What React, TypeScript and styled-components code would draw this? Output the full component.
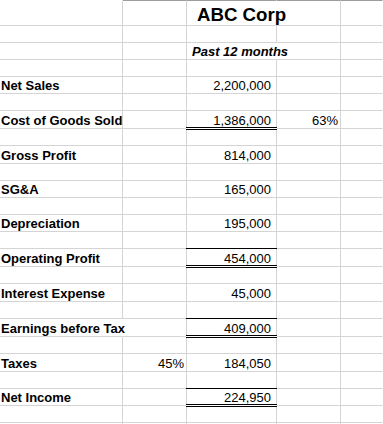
import React from 'react';
import styled, { createGlobalStyle, css } from 'styled-components';

const GlobalStyle = createGlobalStyle`
  html, body {
    margin: 0;
    padding: 0;
    background: #ffffff;
  }
  body {
    font-family: 'Liberation Sans', Arial, sans-serif;
  }
`;

const GRID = '#d4d4d4';

// row heights in px, border included (first row also carries the frame line)
const ROW_HEIGHTS = [26, 17, 17, 17, 17, 17, 18, 17, 18, 17, 17, 17, 17, 17, 18, 17, 18, 17, 18, 17, 18, 17, 17, 17, 17];

const Sheet = styled.div`
  width: 383px;
  height: 424px;
  overflow: hidden;
  display: grid;
  grid-template-columns: 123px 64px 90px 64px 1fr;
  grid-template-rows: ${ROW_HEIGHTS.map((h) => `${h}px`).join(' ')};
  background: #ffffff;
  color: #000000;
`;

type Rule = 'double' | 'total';

const Cell = styled.div<{
  $align?: 'left' | 'right';
  $bold?: boolean;
  $italic?: boolean;
  $big?: boolean;
  $frame?: boolean;
  $open?: boolean;
  $last?: boolean;
  $padL?: number;
  $padR?: number;
  $rule?: Rule;
}>`
  position: relative;
  box-sizing: border-box;
  min-width: 0;
  display: flex;
  align-items: flex-end;
  justify-content: ${(p) => (p.$align === 'right' ? 'flex-end' : 'flex-start')};
  padding: 0 ${(p) => p.$padR ?? 0}px 0 ${(p) => p.$padL ?? 0}px;
  border-bottom: 1px solid ${GRID};
  border-right: 1px solid ${(p) => (p.$open || p.$last ? 'transparent' : GRID)};
  border-top: ${(p) => (p.$frame === undefined ? '0' : `1px solid ${p.$frame ? '#9c9c9c' : 'transparent'}`)};
  white-space: nowrap;
  font-size: ${(p) => (p.$big ? '18.67px' : '13px')};
  line-height: ${(p) => (p.$big ? '21px' : '15px')};
  font-weight: ${(p) => (p.$bold ? 700 : 400)};
  font-style: ${(p) => (p.$italic ? 'italic' : 'normal')};

  ${(p) =>
    p.$rule &&
    css`
      &::after {
        content: '';
        position: absolute;
        left: -1px;
        right: -1px;
        bottom: -2px;
        height: 3px;
        box-sizing: border-box;
        border-top: 1px solid #000;
        border-bottom: 1px solid #000;
        background: #ffffff;
        z-index: 1;
      }
    `}

  ${(p) =>
    p.$rule === 'total' &&
    css`
      &::before {
        content: '';
        position: absolute;
        left: -1px;
        right: -1px;
        top: -1px;
        height: 1px;
        background: #000;
        z-index: 1;
      }
    `}
`;

type Line = {
  title?: string;
  period?: string;
  label?: string;
  rate?: string;
  value?: string;
  share?: string;
  rule?: Rule;
  wide?: boolean;
};

const lines: Line[] = [
  { title: 'ABC Corp' },
  {},
  { period: 'Past 12 months' },
  {},
  { label: 'Net Sales', value: '2,200,000' },
  {},
  { label: 'Cost of Goods Sold', value: '1,386,000', share: '63%', rule: 'double' },
  {},
  { label: 'Gross Profit', value: '814,000' },
  {},
  { label: 'SG&A', value: '165,000' },
  {},
  { label: 'Depreciation', value: '195,000' },
  {},
  { label: 'Operating Profit', value: '454,000', rule: 'total' },
  {},
  { label: 'Interest Expense', value: '45,000' },
  {},
  { label: 'Earnings before Tax', value: '409,000', rule: 'total', wide: true },
  {},
  { label: 'Taxes', rate: '45%', value: '184,050' },
  {},
  { label: 'Net Income', value: '224,950', rule: 'total' },
  {},
  {},
];

const App = () => {
  const renderRow = (line: Line, i: number) => {
    const frame = i === 0 ? true : undefined;

    let middle: React.ReactNode;
    if (line.title) {
      middle = (
        <Cell $frame={frame} $bold $big $open $padL={10}>
          {line.title}
        </Cell>
      );
    } else if (line.period) {
      middle = (
        <Cell $bold $italic $open $padL={5}>
          {line.period}
        </Cell>
      );
    } else {
      middle = (
        <Cell $align="right" $padR={5} $rule={line.rule}>
          {line.value}
        </Cell>
      );
    }

    return (
      <React.Fragment key={i}>
        <Cell $frame={i === 0 ? false : undefined} $bold $open={line.wide} $padL={1}>
          {line.label}
        </Cell>
        <Cell $frame={frame} $align="right" $padR={2}>
          {line.rate}
        </Cell>
        {middle}
        <Cell $frame={frame} $align="right" $padR={2}>
          {line.share}
        </Cell>
        <Cell $frame={frame} $last />
      </React.Fragment>
    );
  };

  return (
    <>
      <GlobalStyle />
      <Sheet>{lines.map(renderRow)}</Sheet>
    </>
  );
};

export default App;
